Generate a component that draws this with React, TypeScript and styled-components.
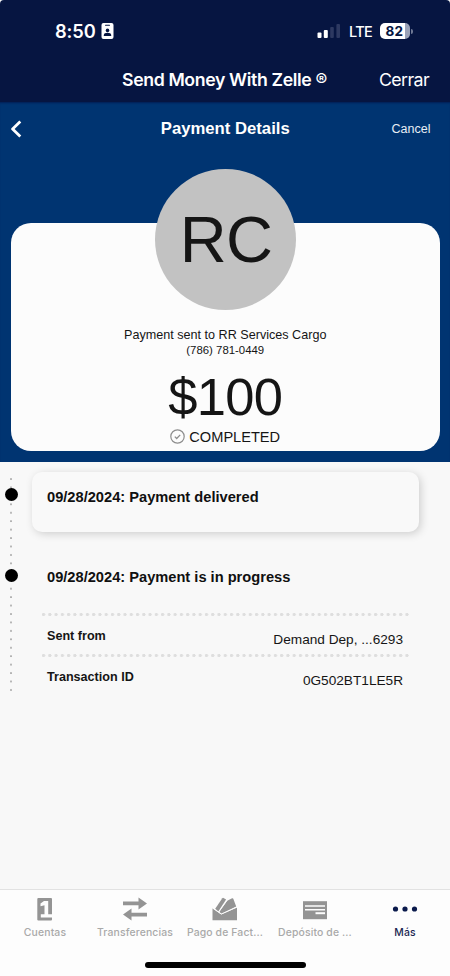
import React from "react";
import styled, { createGlobalStyle } from "styled-components";

const Global = createGlobalStyle`
  * { box-sizing: border-box; }
  html, body { margin: 0; padding: 0; background: #fdfdfd; }
  body { font-family: "Liberation Sans", Arial, sans-serif; color: #151515; }
  button { font: inherit; color: inherit; background: none; border: 0; padding: 0; }
`;

const Screen = styled.div`
  width: 450px;
  height: 976px;
  overflow: hidden;
  display: flex;
  flex-direction: column;
  background: #f8f8f8;
`;

const TopChrome = styled.header`
  height: 102px;
  flex: none;
  background: #061541;
  border-radius: 4px 4px 0 0;
  color: #fff;
  font-family: Inter, sans-serif;
`;

const StatusBar = styled.div`
  height: 60px;
  padding: 2px 37px 0 55px;
  display: flex;
  align-items: center;
`;

const Clock = styled.span`
  font-size: 18.3px;
  font-weight: 600;
  width: 45.5px;
  letter-spacing: -0.1px;
`;

const StatusIcons = styled.div`
  margin-left: auto;
  display: flex;
  align-items: center;
`;

const Network = styled.span`
  margin-left: 8px;
  font-size: 14.5px;
  font-weight: 500;
  width: 31px;
  letter-spacing: -0.7px;
`;

const NavBar = styled.div`
  height: 40px;
  display: grid;
  grid-template-columns: 122px 1fr auto;
  padding-right: 21px;
  align-items: center;
`;

const NavTitle = styled.h1`
  grid-column: 2;
  margin: 0;
  font-size: 17.7px;
  line-height: 36px;
  font-weight: 600;
  letter-spacing: -0.37px;
  white-space: nowrap;
`;

const NavAction = styled.button`
  font-size: 17.8px;
  line-height: 36px;
  font-weight: 400;
  letter-spacing: -0.6px;
`;

const Hero = styled.section`
  height: 359.5px;
  flex: none;
  background: #003471;
  box-shadow: inset 0 2px 2px -1px #021e55;
  padding: 0 10px 0 10.5px;
`;

const HeroBar = styled.div`
  height: 54px;
  display: grid;
  grid-template-columns: 1fr auto 1fr;
  align-items: center;
  color: #fff;
`;

const HeroTitle = styled.h2`
  margin: 0;
  font-size: 16.7px;
  line-height: 20px;
`;

const Cancel = styled.button`
  justify-self: end;
  font-size: 12.5px;
  padding: 0 9.5px 0 0;
  color: #e9eef5;
`;

const Summary = styled.div`
  margin-top: 66.5px;
  height: 228.5px;
  border-radius: 20px;
  background: #fcfcfc;
  display: flex;
  flex-direction: column;
  align-items: center;
`;

const Avatar = styled.div`
  width: 141px;
  height: 141px;
  flex: none;
  margin-top: -54px;
  padding: 1px 0 0 1.5px;
  border-radius: 50%;
  background: #c2c2c2;
  display: flex;
  align-items: center;
  justify-content: center;
  font-size: 65px;
  line-height: 66px;
  letter-spacing: -0.6px;
`;

const Recipient = styled.div`
  margin-top: 18.5px;
  font-size: 12.6px;
  line-height: 15px;
`;

const Phone = styled.div`
  font-size: 11.4px;
  line-height: 15px;
`;

const Amount = styled.div`
  margin-top: 9px;
  font-size: 52.5px;
  line-height: 60px;
  letter-spacing: -0.7px;
`;

const Status = styled.div`
  display: flex;
  align-items: center;
  gap: 4px;
  margin-top: 0.5px;
  font-size: 14.6px;
  line-height: 18px;
`;

const Timeline = styled.main`
  flex: 1;
  display: grid;
  grid-template-columns: 31.5px 387.5px;
  padding-top: 10.5px;
  align-items: start;
`;

const Rail = styled.div`
  margin: 6px 0 0 10.3px;
  width: 2px;
  height: 214px;
  background: radial-gradient(circle at 1px 1px, #9b9b9b 0.5px, transparent 1.1px) 0 0 / 2px 8.44px repeat-y;
  display: flex;
  flex-direction: column;
  align-items: center;
  gap: 68px;
  padding-top: 9.5px;
`;

const Bullet = styled.span`
  width: 13px;
  height: 13px;
  flex: none;
  border-radius: 50%;
  background: #000;
`;

const StepTitle = styled.h3`
  margin: 0;
  font-size: 14.65px;
  line-height: 18px;
  color: #101010;
`;

const ActiveStep = styled.div`
  height: 60px;
  border-radius: 10px;
  padding: 15.5px 15.5px;
  background: #f9f9f9;
  box-shadow: 2px 2px 9px rgba(0, 0, 0, 0.17);
`;

const Step = styled.div`
  padding: 36px 10px 0;
`;

const StepHeading = styled.div`
  height: 44.5px;
  padding-left: 5.5px;
`;

const DetailRow = styled.div`
  height: 41.2px;
  padding: 0 6px 0 5.5px;
  display: flex;
  justify-content: space-between;
  line-height: 16px;
  background: radial-gradient(circle at 1.6px 1.6px, #dedede 1.4px, transparent 1.9px) 0 0 / 6.27px 3.2px repeat-x;
`;

const DetailLabel = styled.span`
  padding-top: 15.2px;
  font-size: 12.6px;
  font-weight: 700;
`;

const DetailValue = styled.span`
  padding-top: 19.2px;
  font-size: 13.65px;
`;

const TabBar = styled.nav`
  height: 87px;
  flex: none;
  background: #fdfdfd;
  border-top: 1px solid #e2e2e2;
  font-family: Inter, sans-serif;
`;

const Tabs = styled.div`
  height: 72px;
  display: grid;
  grid-template-columns: repeat(5, 90px);
`;

const Tab = styled.button<{ $active?: boolean }>`
  display: flex;
  flex-direction: column;
  align-items: center;
  justify-content: flex-start;
  padding-top: 6px;
  color: ${(p) => (p.$active ? "#0a1a4c" : "#949494")};
`;

const TabLabel = styled.span<{ $active?: boolean }>`
  margin-top: 4px;
  font-size: 10.4px;
  line-height: 14px;
  letter-spacing: 0.14px;
  font-weight: 500;
  white-space: nowrap;
  color: ${(p) => (p.$active ? "#1a2550" : "#a9a9a9")};
`;

const HomeIndicator = styled.div`
  width: 161px;
  height: 5.5px;
  border-radius: 3px;
  margin: 0 auto;
  background: #000;
`;

const BatteryShell = styled.div`
  display: flex;
  align-items: center;
  gap: 1px;
`;

const BatteryBody = styled.span`
  width: 30px;
  height: 16px;
  padding-right: 1.5px;
  border-radius: 5px;
  background: linear-gradient(90deg, #fff 82%, #9aa2b8 82%);
  color: #061541;
  font-size: 13.5px;
  line-height: 16.5px;
  font-weight: 700;
  text-align: center;
`;

const BatteryTip = styled.span`
  width: 2px;
  height: 5px;
  border-radius: 0 2px 2px 0;
  background: #6f7995;
`;

const BadgeIcon = () => (
  <svg width="13" height="16" viewBox="0 0 13 16">
    <rect x="0.5" width="12" height="16" rx="2" fill="#fff" />
    <rect x="4" y="1.7" width="5" height="1.1" rx="0.5" fill="#061541" />
    <circle cx="6.5" cy="7.4" r="1.8" fill="#061541" />
    <path d="M2.8 13v-1c0-1.5 1.7-2.2 3.7-2.2s3.7.7 3.7 2.2v1z" fill="#061541" />
  </svg>
);

const SignalIcon = () => (
  <svg width="24" height="16" viewBox="0 0 24 16">
    <rect x="0.5" y="9.5" width="4" height="5.5" rx="1" fill="#fff" />
    <rect x="6.8" y="7" width="4" height="8" rx="1" fill="#fff" />
    <rect x="13.2" y="4" width="3.6" height="11" rx="1" fill="#2d3961" />
    <rect x="19.4" y="1" width="3.6" height="14" rx="1" fill="#2d3961" />
  </svg>
);

const BackIcon = () => (
  <svg width="12" height="18" viewBox="0 0 12 18">
    <path d="M9.3 1.5 1.6 9l7.7 7.5" fill="none" stroke="#fff" strokeWidth="2.8" strokeLinejoin="round" />
  </svg>
);

const CheckIcon = () => (
  <svg width="15" height="15" viewBox="0 0 15 15" fill="none" stroke="#8d8d8d">
    <circle cx="7.5" cy="7.5" r="6.7" strokeWidth="1.2" />
    <path d="m4.8 7.6 1.9 1.9 3.5-3.6" strokeWidth="1.3" />
  </svg>
);

const AccountsIcon = () => (
  <svg width="30" height="26" viewBox="0 0 30 26">
    <rect x="7.3" y="2" width="14.7" height="22.5" rx="1" fill="currentColor" />
    <path fill="#fdfdfd" d="M14 5h4.2v13.2H22v3.3H10.8v-3.3h3.7V9.3l-4 .9V7.5z" />
  </svg>
);

const TransferIcon = () => (
  <svg width="30" height="26" viewBox="0 0 30 26">
    <path fill="currentColor" d="M3 5.5h15.5v-4L27 7.4l-8.5 6V9.2H3zM27 20.5H11.5v4L3 18.6l8.5-6v4.2H27z" />
  </svg>
);

const BillIcon = () => (
  <svg width="30" height="26" viewBox="0 0 30 26" fill="currentColor">
    <path d="M5.2 12.8 12.3 2.3q.5-.7 1.2-.3l2.6 1.6-7.8 12z" />
    <path d="M9.2 15.8 17.2 4.8l4.9-2.5q.8-.4 1.2.4l2.9 7.7-13 6.5-1.7.9z" />
    <path d="M2.5 12.2 11.3 18.5 27 11.5V24.3H2.5z" />
    <path d="M2.5 12 11.3 18 27 11M8.8 16 17 4.2" fill="none" stroke="#fdfdfd" strokeWidth="0.9" />
  </svg>
);

const CheckDepositIcon = () => (
  <svg width="30" height="26" viewBox="0 0 30 26">
    <rect x="3" y="5.2" width="24" height="18" fill="currentColor" />
    <path stroke="#fdfdfd" strokeWidth="1.5" fill="none" d="M5 10h20M5 13.8h20" />
    <path stroke="#fdfdfd" strokeWidth="2" fill="none" d="M15.5 17.2H25" />
  </svg>
);

const MoreIcon = () => (
  <svg width="30" height="26" viewBox="0 0 30 26" fill="currentColor">
    <circle cx="5.5" cy="13" r="2.6" />
    <circle cx="15" cy="13" r="2.6" />
    <circle cx="24.5" cy="13" r="2.6" />
  </svg>
);

const tabs = [
  { label: "Cuentas", Icon: AccountsIcon },
  { label: "Transferencias", Icon: TransferIcon },
  { label: "Pago de Fact...", Icon: BillIcon },
  { label: "Depósito de ...", Icon: CheckDepositIcon },
  { label: "Más", Icon: MoreIcon, active: true },
];

const details = [
  { label: "Sent from", value: "Demand Dep, ...6293" },
  { label: "Transaction ID", value: "0G502BT1LE5R" },
];

export default function App() {
  return (
    <Screen>
      <Global />
      <TopChrome>
        <StatusBar>
          <Clock>8:50</Clock>
          <BadgeIcon />
          <StatusIcons>
            <SignalIcon />
            <Network>LTE</Network>
            <BatteryShell>
              <BatteryBody>82</BatteryBody>
              <BatteryTip />
            </BatteryShell>
          </StatusIcons>
        </StatusBar>
        <NavBar>
          <NavTitle>Send Money With Zelle ®</NavTitle>
          <NavAction>Cerrar</NavAction>
        </NavBar>
      </TopChrome>
      <Hero>
        <HeroBar>
          <BackIcon />
          <HeroTitle>Payment Details</HeroTitle>
          <Cancel>Cancel</Cancel>
        </HeroBar>
        <Summary>
          <Avatar>RC</Avatar>
          <Recipient>Payment sent to RR Services Cargo</Recipient>
          <Phone>(786) 781-0449</Phone>
          <Amount>$100</Amount>
          <Status>
            <CheckIcon />
            COMPLETED
          </Status>
        </Summary>
      </Hero>
      <Timeline>
        <Rail>
          <Bullet />
          <Bullet />
        </Rail>
        <div>
          <ActiveStep>
            <StepTitle>09/28/2024: Payment delivered</StepTitle>
          </ActiveStep>
          <Step>
            <StepHeading>
              <StepTitle>09/28/2024: Payment is in progress</StepTitle>
            </StepHeading>
            {details.map((d) => (
              <DetailRow key={d.label}>
                <DetailLabel>{d.label}</DetailLabel>
                <DetailValue>{d.value}</DetailValue>
              </DetailRow>
            ))}
          </Step>
        </div>
      </Timeline>
      <TabBar>
        <Tabs>
          {tabs.map(({ label, Icon, active }) => (
            <Tab key={label} $active={active}>
              <Icon />
              <TabLabel $active={active}>{label}</TabLabel>
            </Tab>
          ))}
        </Tabs>
        <HomeIndicator />
      </TabBar>
    </Screen>
  );
}
